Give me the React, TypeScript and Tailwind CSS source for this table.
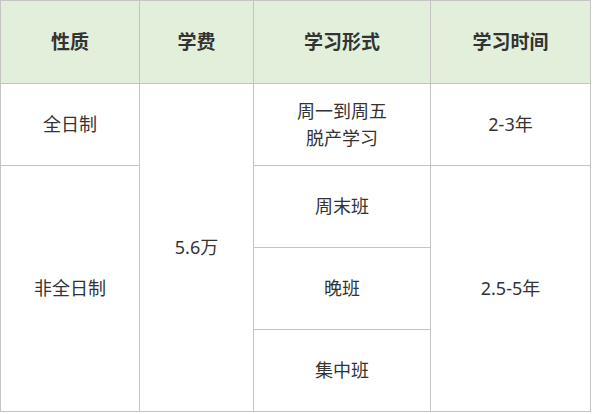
export default function App() {
  const head = "flex items-center justify-center bg-[#e2efda] text-[19px] font-bold text-[#333]";
  const cell = "flex items-center justify-center bg-white text-[18px] text-[#333] text-center";
  return (
    <div className="w-[593px] h-[414px] bg-white" style={{ fontFamily: '"Noto Sans", "Noto Sans CJK SC", sans-serif' }}>
      <div className="grid w-[591px] grid-cols-[138px_113px_176px_159px] grid-rows-[82px_81px_81px_81px_81px] gap-px bg-[#c4c4c4] p-px">
        <div className={head}>性质</div>
        <div className={head}>学费</div>
        <div className={head}>学习形式</div>
        <div className={head}>学习时间</div>

        <div className={`${cell} col-start-1 row-start-2`}>全日制</div>
        <div className={`${cell} col-start-2 row-start-2 row-span-4`}>5.6万</div>
        <div className={`${cell} col-start-3 row-start-2 flex-col leading-[27px]`}>
          <span>周一到周五</span>
          <span>脱产学习</span>
        </div>
        <div className={`${cell} col-start-4 row-start-2`}>2-3年</div>

        <div className={`${cell} col-start-1 row-start-3 row-span-3`}>非全日制</div>
        <div className={`${cell} col-start-3 row-start-3`}>周末班</div>
        <div className={`${cell} col-start-4 row-start-3 row-span-3`}>2.5-5年</div>
        <div className={`${cell} col-start-3 row-start-4`}>晚班</div>
        <div className={`${cell} col-start-3 row-start-5`}>集中班</div>
      </div>
    </div>
  );
}
